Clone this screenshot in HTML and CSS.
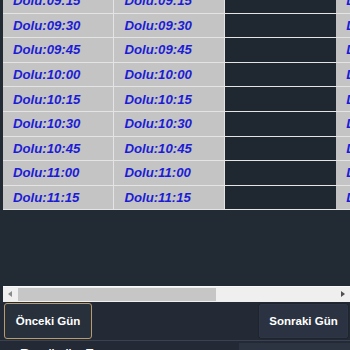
FILE: index.html
```html
<!DOCTYPE html>
<html lang="tr">
<head>
<meta charset="utf-8">
<title>Randevu</title>
<link rel="stylesheet" href="styles.css">
</head>
<body>
<div class="app">
  <div class="grid-view">
    <div class="viewport">
      <table class="slots">
        <tbody>
          <tr><td>Dolu:09:15</td><td>Dolu:09:15</td><td class="empty"></td><td>Dolu:09:15</td><td>Dolu:09:15</td></tr>
          <tr><td>Dolu:09:30</td><td>Dolu:09:30</td><td class="empty"></td><td>Dolu:09:30</td><td>Dolu:09:30</td></tr>
          <tr><td>Dolu:09:45</td><td>Dolu:09:45</td><td class="empty"></td><td>Dolu:09:45</td><td>Dolu:09:45</td></tr>
          <tr><td>Dolu:10:00</td><td>Dolu:10:00</td><td class="empty"></td><td>Dolu:10:00</td><td>Dolu:10:00</td></tr>
          <tr><td>Dolu:10:15</td><td>Dolu:10:15</td><td class="empty"></td><td>Dolu:10:15</td><td>Dolu:10:15</td></tr>
          <tr><td>Dolu:10:30</td><td>Dolu:10:30</td><td class="empty"></td><td>Dolu:10:30</td><td>Dolu:10:30</td></tr>
          <tr><td>Dolu:10:45</td><td>Dolu:10:45</td><td class="empty"></td><td>Dolu:10:45</td><td>Dolu:10:45</td></tr>
          <tr><td>Dolu:11:00</td><td>Dolu:11:00</td><td class="empty"></td><td>Dolu:11:00</td><td>Dolu:11:00</td></tr>
          <tr><td>Dolu:11:15</td><td>Dolu:11:15</td><td class="empty"></td><td>Dolu:11:15</td><td>Dolu:11:15</td></tr>
        </tbody>
      </table>
    </div>
    <div class="hscroll">
      <span class="arrow arrow-left"></span>
      <div class="track"><div class="thumb"></div></div>
      <span class="arrow arrow-right"></span>
    </div>
  </div>
  <div class="nav">
    <button class="btn btn-prev">Önceki Gün</button>
    <button class="btn btn-next">Sonraki Gün</button>
  </div>
  <div class="footer">
    <div class="today">Bugünün Zamanı</div>
    <div class="side-box"></div>
  </div>
</div>
</body>
</html>
```

FILE: styles.css
```css
html, body {
  margin: 0;
  padding: 0;
  background: #232a35;
  height: 100%;
  overflow: hidden;
}

.app {
  width: 350px;
  height: 350px;
  overflow: hidden;
  font-family: "Liberation Sans", Arial, sans-serif;
  background: #232a35;
}

.grid-view {
  padding-left: 3px;
  background: #222a34;
}

.viewport {
  height: 286px;
  overflow: hidden;
}

.slots {
  border-collapse: collapse;
  table-layout: fixed;
  width: 555px;
  margin-top: -12px;
}

.slots td {
  width: 110px;
  height: 24.6px;
  padding: 0 0 0 10px;
  box-sizing: border-box;
  background: #c4c4c4;
  border: 1px solid #e4e4e4;
  color: #1c1cd6;
  font-weight: bold;
  font-style: italic;
  font-size: 13.2px;
  line-height: 15px;
  white-space: nowrap;
  vertical-align: middle;
}

.slots td.empty {
  background: #1f2730;
  border-left-color: #1f2730;
  border-right-color: #1f2730;
}

.slots td:first-child {
  border-left: none;
}

.hscroll {
  display: flex;
  height: 15px;
  border-top: 1px solid #fafafa;
  background: #efefef;
}

.arrow {
  width: 15px;
  position: relative;
  flex: none;
}

.arrow-left::before {
  content: "";
  position: absolute;
  left: 5px;
  top: 4px;
  border-top: 3px solid transparent;
  border-bottom: 3px solid transparent;
  border-right: 4px solid #8a8a8a;
}

.arrow-right::before {
  content: "";
  position: absolute;
  left: 6px;
  top: 4px;
  border-top: 3.5px solid transparent;
  border-bottom: 3.5px solid transparent;
  border-left: 4px solid #505050;
}

.track {
  flex: 1;
  padding: 1px 0;
}

.thumb {
  width: 198px;
  height: 13px;
  background: #c6c6c6;
}

.nav {
  display: flex;
  justify-content: space-between;
  align-items: center;
  height: 38px;
  padding: 0 2px 0 4px;
  border-bottom: 1px solid #3a4150;
}

.btn {
  font-family: "Liberation Sans", Arial, sans-serif;
  font-weight: bold;
  font-size: 11.5px;
  color: #ffffff;
  cursor: pointer;
  margin: 0;
}

.btn-prev {
  width: 88px;
  height: 36px;
  background: #28303c;
  border: 1.5px solid #b99c6c;
  border-radius: 3px;
}

.btn-next {
  width: 89px;
  height: 34px;
  background: #2b3241;
  border: 1px solid #2e3544;
  border-radius: 2px;
  box-shadow: 0 0 2px rgba(0, 0, 0, 0.4);
}

.footer {
  display: flex;
  justify-content: space-between;
  align-items: flex-start;
  padding-top: 2px;
}

.today {
  padding: 3px 0 0 20px;
  color: #ffffff;
  font-weight: bold;
  font-size: 14px;
  line-height: 16px;
}

.side-box {
  width: 111px;
  height: 20px;
  background: #2d3441;
}
```
